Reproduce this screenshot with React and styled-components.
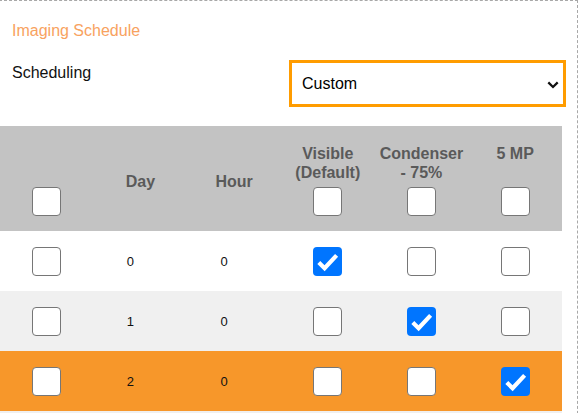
import React from 'react';
import styled, { createGlobalStyle } from 'styled-components';

const columns = [
  { key: 'visible', label: ['Visible', '(Default)'] },
  { key: 'condenser', label: ['Condenser', '- 75%'] },
  { key: 'mp5', label: ['5 MP'] }
];

const rows = [
  { day: 0, hour: 0, visible: true, condenser: false, mp5: false },
  { day: 1, hour: 0, visible: false, condenser: true, mp5: false },
  { day: 2, hour: 0, visible: false, condenser: false, mp5: true, active: true },
  { day: 3, hour: 0, visible: false, condenser: false, mp5: false }
];

const CheckBox = ({ checked }) => (
  <CheckLabel>
    <HiddenInput type="checkbox" defaultChecked={checked} />
    <Box $checked={checked}>
      {checked && (
        <svg width="29" height="29" viewBox="0 0 29 29">
          <path
            d="M5.8 15.6 L11.6 21.2 L23.6 8.4"
            fill="none"
            stroke="#fff"
            strokeWidth="4.2"
          />
        </svg>
      )}
    </Box>
  </CheckLabel>
);

const App = () => (
  <>
    <GlobalStyle />
    <Panel>
      <Title>Imaging Schedule</Title>
      <FieldRow>
        <Label>Scheduling</Label>
        <SelectWrap>
          <Select defaultValue="custom">
            <option value="custom">Custom</option>
            <option value="daily">Daily</option>
          </Select>
          <Chevron width="12" height="8" viewBox="0 0 12 8">
            <path d="M1.3 1.4 L6 6 L10.7 1.4" fill="none" stroke="#111" strokeWidth="2.3" />
          </Chevron>
        </SelectWrap>
      </FieldRow>
      <Scroller>
        <Table>
          <thead>
            <tr>
              <Th>
                <HeadInner $end>
                  <CheckBox />
                </HeadInner>
              </Th>
              <Th>
                <HeadInner>
                  <HeadText $nudge>Day</HeadText>
                </HeadInner>
              </Th>
              <Th>
                <HeadInner>
                  <HeadText $nudge>Hour</HeadText>
                </HeadInner>
              </Th>
              {columns.map((c) => (
                <Th key={c.key}>
                  <HeadInner $split>
                    <HeadText>
                      {c.label.map((l) => (
                        <span key={l}>{l}</span>
                      ))}
                    </HeadText>
                    <CheckBox />
                  </HeadInner>
                </Th>
              ))}
            </tr>
          </thead>
          <tbody>
            {rows.map((r, i) => (
              <Row key={r.day} $odd={i % 2 === 1} $active={r.active}>
                <Td>
                  <CheckBox />
                </Td>
                <Td $text>{r.day}</Td>
                <Td $text>{r.hour}</Td>
                {columns.map((c) => (
                  <Td key={c.key}>
                    <CheckBox checked={r[c.key]} />
                  </Td>
                ))}
              </Row>
            ))}
          </tbody>
        </Table>
      </Scroller>
    </Panel>
  </>
);

const GlobalStyle = createGlobalStyle`
  body {
    margin: 0;
    overflow: hidden;
    background: #fff;
    font-family: "Liberation Sans", Arial, sans-serif;
  }
`;

const Panel = styled.div`
  box-sizing: border-box;
  width: 579px;
  margin-left: -1px;
  border: 1px dashed #a8a8a8;
`;

const Title = styled.div`
  padding: 21px 12px 0;
  font-size: 16px;
  line-height: 18px;
  color: #f8a260;
`;

const FieldRow = styled.div`
  display: grid;
  grid-template-columns: 1fr 1fr;
  align-items: start;
  padding: 20px 11px 0 12px;
`;

const Label = styled.div`
  padding-top: 4px;
  font-size: 16px;
  line-height: 18px;
  color: #111;
`;

const SelectWrap = styled.div`
  position: relative;
`;

const Select = styled.select`
  appearance: none;
  box-sizing: border-box;
  width: 100%;
  height: 47px;
  padding: 0 30px 0 10px;
  border: 3px solid #ff9c00;
  border-radius: 0;
  background: #fff;
  font-family: "Liberation Sans", Arial, sans-serif;
  font-size: 16px;
  color: #000;
  outline: none;
`;

const Chevron = styled.svg`
  position: absolute;
  right: 7px;
  top: 21px;
  pointer-events: none;
`;

const Scroller = styled.div`
  margin-top: 19px;
  height: 322px;
  overflow-y: scroll;

  &::-webkit-scrollbar {
    width: 15px;
  }
  &::-webkit-scrollbar-track {
    background: #fff;
  }
  &::-webkit-scrollbar-thumb {
    background: #b9b9b9;
    background-clip: padding-box;
    border: 4px solid transparent;
    border-right-width: 3px;
    border-radius: 8px;
  }
`;

const Table = styled.table`
  width: 562px;
  table-layout: fixed;
  border-collapse: collapse;
`;

const Th = styled.th`
  padding: 18px 0 15px;
  background: #c3c3c3;
  vertical-align: top;
`;

const HeadInner = styled.div`
  display: flex;
  flex-direction: column;
  align-items: center;
  justify-content: ${(p) => (p.$split ? 'space-between' : p.$end ? 'flex-end' : 'center')};
  height: 72px;
`;

const HeadText = styled.div`
  display: flex;
  flex-direction: column;
  align-items: center;
  padding-top: ${(p) => (p.$nudge ? '3px' : '0')};
  font-size: 16px;
  font-weight: bold;
  line-height: 19px;
  color: #5a5a5a;
`;

const Row = styled.tr`
  height: 60px;
  background: ${(p) => (p.$active ? '#f7972a' : p.$odd ? '#f0f0f0' : '#fff')};
`;

const Td = styled.td`
  padding: ${(p) => (p.$text ? '0 20px 0 0' : '0')};
  text-align: center;
  vertical-align: middle;
  font-size: 13px;
  color: #111;
`;

const CheckLabel = styled.label`
  display: inline-flex;
  vertical-align: middle;
`;

const HiddenInput = styled.input`
  position: absolute;
  opacity: 0;
  width: 0;
  height: 0;
  margin: 0;
`;

const Box = styled.span`
  box-sizing: border-box;
  display: block;
  width: 29px;
  height: 29px;
  border-radius: 4px;
  border: ${(p) => (p.$checked ? 'none' : '1.5px solid #767676')};
  background: ${(p) => (p.$checked ? '#0075ff' : '#fff')};

  svg {
    display: block;
  }
`;

export default App;
